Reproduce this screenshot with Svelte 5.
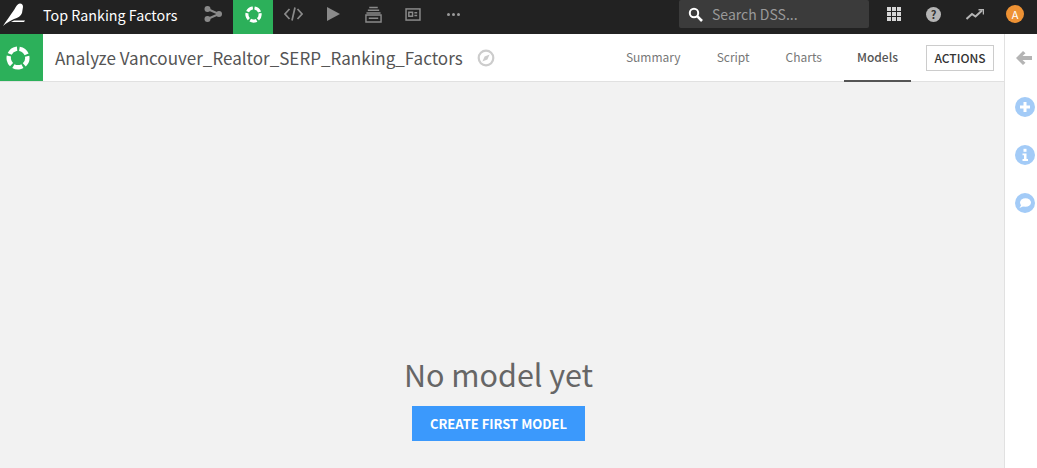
<script>
  const tabs = ['Summary', 'Script', 'Charts', 'Models'];
</script>

{#snippet ring(size)}
  <svg width={size} height={size} viewBox="0 0 24 24" fill="none" stroke="#fff" stroke-width="4.4">
    <circle cx="12" cy="12" r="9.3" stroke-dasharray="9.4 2.29" transform="rotate(-11 12 12)" />
  </svg>
{/snippet}

<div class="page">
  <header class="top">
    <div class="brand">
      <svg width="24" height="26" viewBox="0 0 24 26" fill="#fff">
        <path d="M2 25 C5 20 9 15 13 9 C15 6 16 3 19 2.5 C21 2.5 22 4 22 6 L21 12 C20 15 17 17 13 18 C9 20 5 22 2 25Z" />
        <path d="M13 19.5 H24 L23 21 H10Z" />
      </svg>
    </div>
    <div class="project">Top Ranking Factors</div>
    <div class="nav">
      <span class="nav-item">
        <svg width="18" height="16" viewBox="0 0 18 16" fill="#8a8a8a">
          <circle cx="3.5" cy="3" r="3" />
          <circle cx="3.5" cy="13" r="3" />
          <circle cx="15" cy="8" r="3" />
          <path d="M3.5 3 L15 8 L3.5 13" fill="none" stroke="#8a8a8a" stroke-width="2" />
        </svg>
      </span>
      <span class="nav-item active">{@render ring(17)}</span>
      <span class="nav-item">
        <svg width="19" height="16" viewBox="0 0 19 16" fill="none" stroke="#8a8a8a" stroke-width="1.7">
          <path d="M5.5 3 L1 8 L5.5 13 M13.5 3 L18 8 L13.5 13 M11 1.5 L8 14.5" />
        </svg>
      </span>
      <span class="nav-item">
        <svg width="14" height="16" viewBox="0 0 14 16" fill="#8a8a8a"><path d="M1 1 L14 8 L1 15Z" /></svg>
      </span>
      <span class="nav-item">
        <svg width="17" height="17" viewBox="0 0 18 18" fill="none" stroke="#8a8a8a" stroke-width="1.6">
          <path d="M4.5 1.5 H13.5 M3 4.5 H15 M1.5 7.5 H16.5" />
          <path d="M1 9.5 H17 V17 H1 Z M4 13 H14" stroke-width="1.5" />
        </svg>
      </span>
      <span class="nav-item">
        <svg width="16" height="13" viewBox="0 0 17 14" fill="none" stroke="#8a8a8a" stroke-width="1.6">
          <rect x="1" y="1" width="15" height="12" />
          <path d="M4 4.5 H8 V9 H4Z M10 5 H13 M10 8 H13" />
        </svg>
      </span>
      <span class="nav-item dots"><i></i><i></i><i></i></span>
    </div>
    <div class="search">
      <svg width="15" height="15" viewBox="0 0 15 15" fill="none" stroke="#fff" stroke-width="2">
        <circle cx="6" cy="6" r="4.2" /><path d="M9.2 9.2 L14 14" stroke-width="2.6" />
      </svg>
      <span>Search DSS...</span>
    </div>
    <div class="tools">
      <span class="grid">
        {#each Array(9) as _}<i></i>{/each}
      </span>
      <span class="help">?</span>
      <svg width="18" height="11" viewBox="0 0 18 11" fill="none" stroke="#b5b5b5" stroke-width="2">
        <path d="M0.5 10 L6 5 L9.5 7.5 L16 1.5" /><path d="M12.5 0.8 H17.5 V5.5" stroke-width="1.5" />
      </svg>
      <span class="avatar">A</span>
    </div>
  </header>

  <div class="body">
    <div class="content">
      <div class="head">
        <div class="icon-box">{@render ring(24)}</div>
        <h1>Analyze Vancouver_Realtor_SERP_Ranking_Factors</h1>
        <svg class="compass" width="18" height="18" viewBox="0 0 18 18" fill="none">
          <circle cx="9" cy="9" r="7.3" stroke="#ccc" stroke-width="2.2" />
          <path d="M12.6 5.4 L10.4 10.4 L5.4 12.6 L7.6 7.6Z" fill="#ccc" />
        </svg>
        <nav class="tabs">
          {#each tabs as tab}
            <span class="tab" class:current={tab === 'Models'}>{tab}</span>
          {/each}
        </nav>
        <button class="actions">ACTIONS</button>
      </div>
      <main class="empty">
        <div class="title">No model yet</div>
        <button class="create">CREATE FIRST MODEL</button>
      </main>
    </div>
    <aside class="side">
      <svg class="back" width="16" height="14" viewBox="0 0 16 14" fill="#b4b4b4">
        <path d="M7 0 L9.5 2.3 L6.5 5 H16 V9 H6.5 L9.5 11.7 L7 14 L0 7Z" />
      </svg>
      <svg width="20" height="20" viewBox="0 0 20 20">
        <circle cx="10" cy="10" r="10" fill="#a3cbf7" />
        <path d="M10 5 V15 M5 10 H15" stroke="#fff" stroke-width="3" />
      </svg>
      <svg width="20" height="20" viewBox="0 0 20 20">
        <circle cx="10" cy="10" r="10" fill="#a3cbf7" />
        <rect x="8.5" y="3.8" width="3" height="3" fill="#fff" />
        <path d="M7.5 8.5 H11.5 V14 H13 V16 H7.5 V14 H9 V10.3 H7.5Z" fill="#fff" />
      </svg>
      <svg width="20" height="20" viewBox="0 0 20 20">
        <circle cx="10" cy="10" r="10" fill="#a3cbf7" />
        <ellipse cx="10.5" cy="9.5" rx="5.5" ry="4.3" fill="#fff" />
        <path d="M6.5 11.5 L4.5 15 L9 13Z" fill="#fff" />
      </svg>
    </aside>
  </div>
</div>

<style>
  :global(body) {
    margin: 0;
    background: #f2f2f2;
  }
  .page {
    width: 1037px;
    height: 468px;
    display: flex;
    flex-direction: column;
    overflow: hidden;
    font-family: "Noto Sans CJK SC", "Noto Sans", sans-serif;
  }
  .top {
    height: 34px;
    background: #222;
    display: flex;
    align-items: flex-start;
    flex: none;
  }
  .brand {
    width: 43px;
    height: 28px;
    padding-left: 1px;
    box-sizing: border-box;
    display: flex;
    align-items: flex-start;
    padding-top: 1px;
  }
  .project {
    width: 150px;
    color: #fff;
    font-size: 14.3px;
    line-height: 30px;
    height: 30px;
  }
  .nav {
    display: flex;
    height: 34px;
  }
  .nav-item {
    width: 40px;
    height: 34px;
    padding-bottom: 6px;
    box-sizing: border-box;
    display: flex;
    align-items: center;
    justify-content: center;
  }
  .active {
    background: #2cb05a;
  }
  .dots {
    gap: 2px;
  }
  .dots i {
    width: 3px;
    height: 3px;
    border-radius: 50%;
    background: #9a9a9a;
  }
  .search {
    margin-left: 206px;
    width: 190px;
    height: 28px;
    background: #3b3b3b;
    display: flex;
    align-items: center;
    gap: 9px;
    padding-left: 9px;
    box-sizing: border-box;
    border-radius: 2px;
    color: #999;
    font-size: 14px;
    line-height: 28px;
  }
  .tools {
    display: flex;
    align-items: center;
    flex: 1;
    height: 28px;
    padding-left: 18px;
    gap: 25px;
  }
  .grid {
    display: grid;
    grid-template-columns: repeat(3, 4px);
    grid-auto-rows: 4px;
    gap: 1px;
  }
  .grid i {
    background: #d6d6d6;
  }
  .help {
    width: 15px;
    height: 15px;
    border-radius: 50%;
    background: #b5b5b5;
    color: #333;
    font-size: 11px;
    font-weight: 700;
    line-height: 15px;
    text-align: center;
  }
  .avatar {
    width: 18px;
    height: 18px;
    margin-left: -3px;
    border-radius: 50%;
    background: #ee9234;
    color: #fff;
    font-size: 11px;
    line-height: 18px;
    text-align: center;
  }
  .body {
    flex: 1;
    display: flex;
    min-height: 0;
  }
  .content {
    flex: 1;
    display: flex;
    flex-direction: column;
    min-width: 0;
  }
  .head {
    height: 48px;
    box-sizing: border-box;
    background: #fff;
    border-bottom: 1px solid #e1e1e1;
    display: flex;
    align-items: center;
    flex: none;
  }
  .icon-box {
    width: 43px;
    height: 47px;
    padding: 0 7px 0 0;
    box-sizing: border-box;
    background: #2cb05a;
    display: flex;
    align-items: center;
    justify-content: center;
    flex: none;
  }
  h1 {
    margin: 0 0 0 12px;
    font-size: 17.04px;
    font-weight: 400;
    line-height: 47px;
    color: #555;
    white-space: nowrap;
  }
  .compass {
    margin-left: 14px;
  }
  .tabs {
    margin-left: auto;
    display: flex;
    height: 47px;
  }
  .tab {
    padding: 0 13px;
    margin-right: 10px;
    font-size: 12px;
    line-height: 46px;
    color: #777;
    box-sizing: border-box;
  }
  .current {
    color: #555;
    border-bottom: 2px solid #555;
    height: 48px;
    margin-left: -1px;
    font-weight: 500;
  }
  .actions {
    margin: 0 10px 0 5px;
    width: 68px;
    height: 26px;
    padding: 0;
    background: #fff;
    border: 1px solid #ccc;
    font: 500 12px/24px "Noto Sans CJK SC", sans-serif;
    color: #333;
  }
  .empty {
    flex: 1;
    background: #f2f2f2;
    display: flex;
    flex-direction: column;
    align-items: center;
    padding: 272px 7px 0 0;
    box-sizing: border-box;
  }
  .title {
    font-size: 30.5px;
    line-height: 40px;
    color: #666;
  }
  .create {
    margin-top: 12px;
    width: 173px;
    height: 35px;
    padding: 0;
    border: 0;
    background: #3b99fc;
    color: #fff;
    font: 700 13px/35px "Noto Sans CJK SC", sans-serif;
  }
  .side {
    width: 33px;
    flex: none;
    box-sizing: border-box;
    background: #fff;
    border-left: 1px solid #e1e1e1;
    display: flex;
    flex-direction: column;
    align-items: center;
    gap: 28px;
    padding: 17px 0 0 8px;
  }
  .back {
    margin-bottom: 4px;
    margin-left: -3px;
  }
</style>
